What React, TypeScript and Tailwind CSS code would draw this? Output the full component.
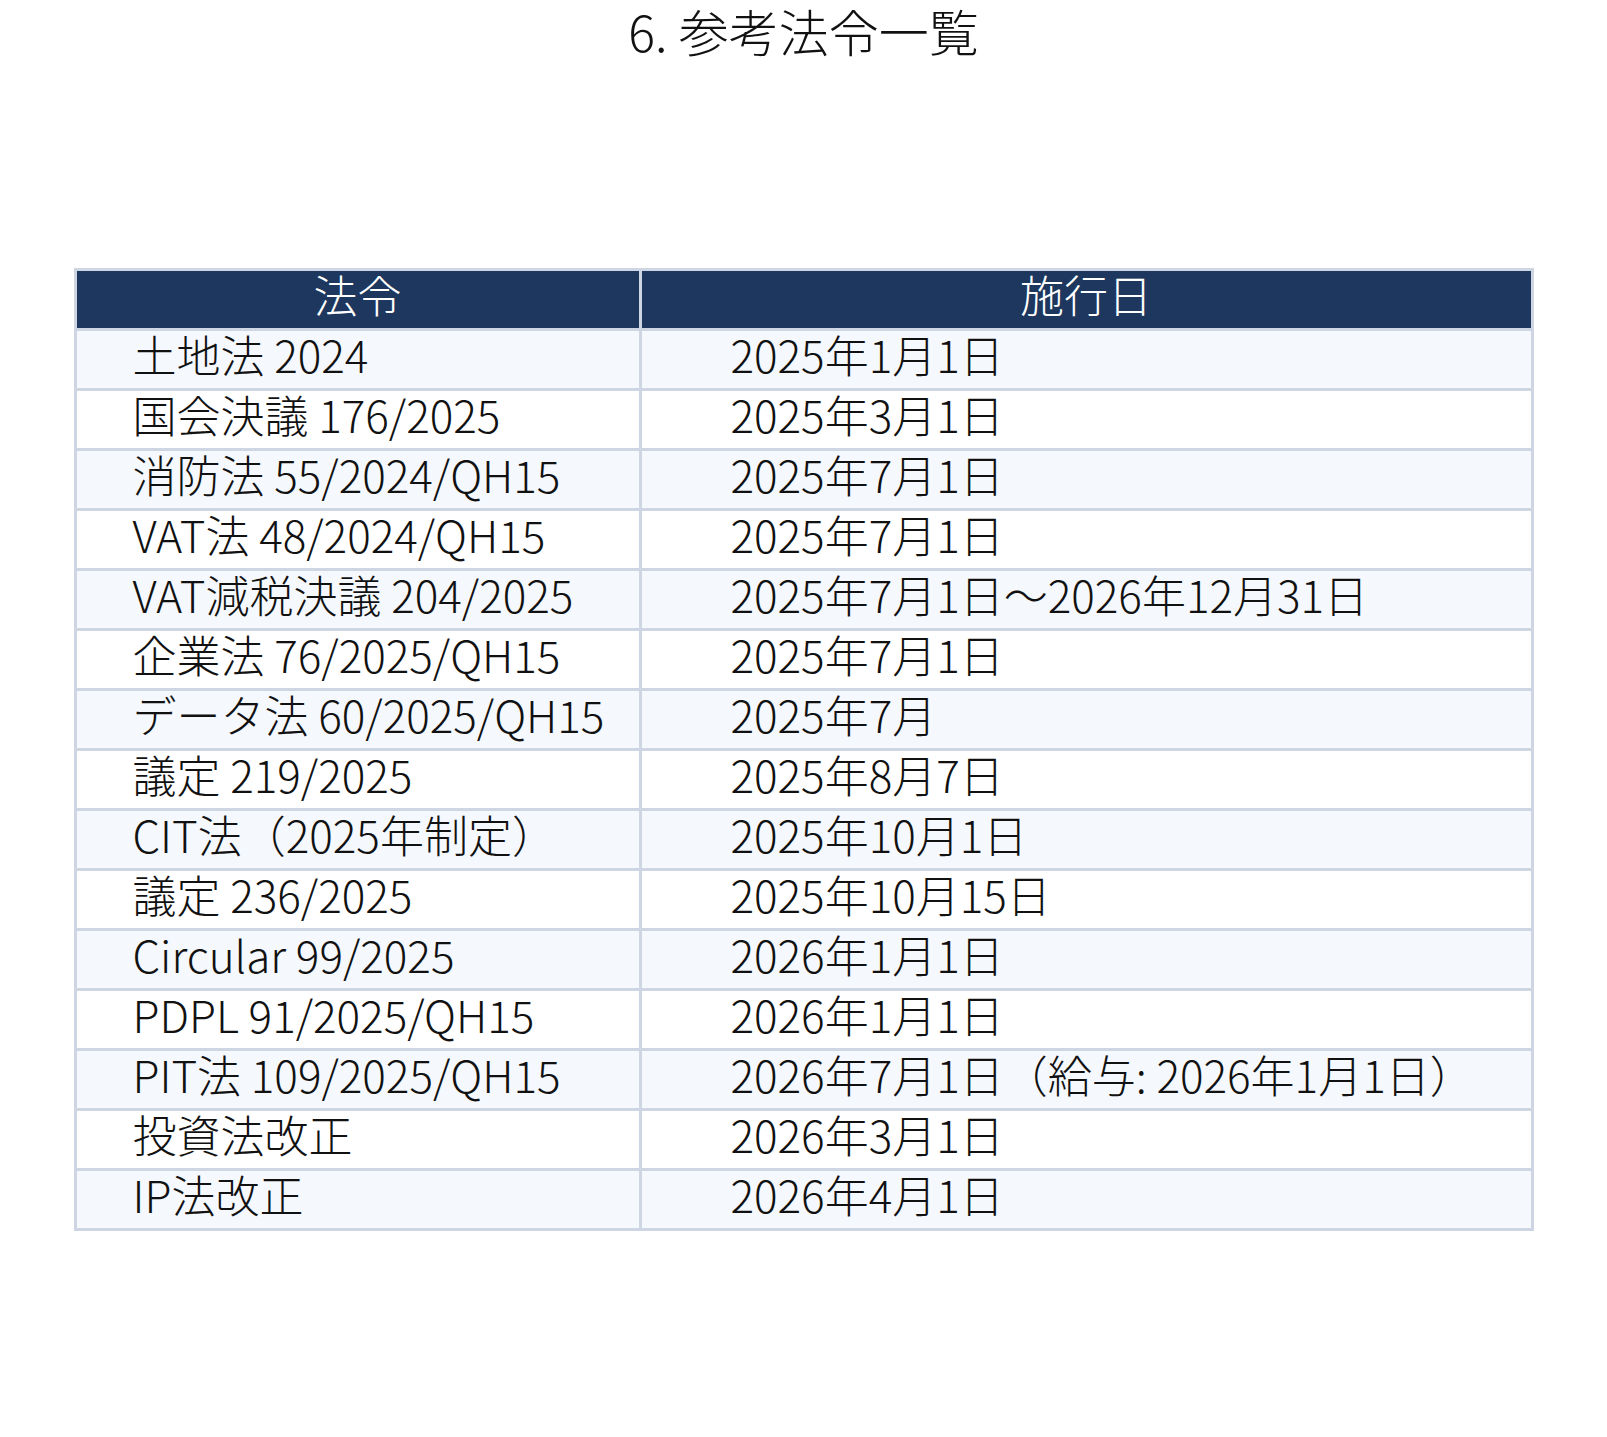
import React from "react";

type LawRow = {
  law: string;
  date: string;
};

const rows: LawRow[] = [
  { law: "土地法 2024", date: "2025年1月1日" },
  { law: "国会決議 176/2025", date: "2025年3月1日" },
  { law: "消防法 55/2024/QH15", date: "2025年7月1日" },
  { law: "VAT法 48/2024/QH15", date: "2025年7月1日" },
  { law: "VAT減税決議 204/2025", date: "2025年7月1日～2026年12月31日" },
  { law: "企業法 76/2025/QH15", date: "2025年7月1日" },
  { law: "データ法 60/2025/QH15", date: "2025年7月" },
  { law: "議定 219/2025", date: "2025年8月7日" },
  { law: "CIT法（2025年制定）", date: "2025年10月1日" },
  { law: "議定 236/2025", date: "2025年10月15日" },
  { law: "Circular 99/2025", date: "2026年1月1日" },
  { law: "PDPL 91/2025/QH15", date: "2026年1月1日" },
  { law: "PIT法 109/2025/QH15", date: "2026年7月1日（給与: 2026年1月1日）" },
  { law: "投資法改正", date: "2026年3月1日" },
  { law: "IP法改正", date: "2026年4月1日" },
];

export default function App() {
  return (
    <div className="min-h-screen bg-white font-['Noto_Sans_CJK_JP_Light','Noto_Sans_CJK_JP','Noto_Sans',sans-serif] font-light text-[#111]">
      <h1 className="text-center text-[50px] font-light leading-[60px]">6. 参考法令一覧</h1>

      <div className="mx-auto mt-[208px] grid w-[1460px] grid-cols-[562px_889px] gap-[3px] bg-[#cdd6e2] p-[3px]">
        <div className="flex h-[57px] items-center justify-center bg-[#1d375e] pb-[12px] text-[44px] leading-none text-white">
          法令
        </div>
        <div className="flex h-[57px] items-center justify-center bg-[#1d375e] pb-[12px] text-[44px] leading-none text-white">
          施行日
        </div>

        {rows.map((row, i) => {
          const bg = i % 2 === 0 ? "bg-[#f5f8fc]" : "bg-white";
          return (
            <React.Fragment key={row.law}>
              <div className={`flex h-[57px] items-center whitespace-nowrap pb-[12px] pl-[56px] text-[44px] leading-none ${bg}`}>
                {row.law}
              </div>
              <div className={`flex h-[57px] items-center whitespace-nowrap pb-[12px] pl-[89px] text-[44px] leading-none ${bg}`}>
                {row.date}
              </div>
            </React.Fragment>
          );
        })}
      </div>
    </div>
  );
}
